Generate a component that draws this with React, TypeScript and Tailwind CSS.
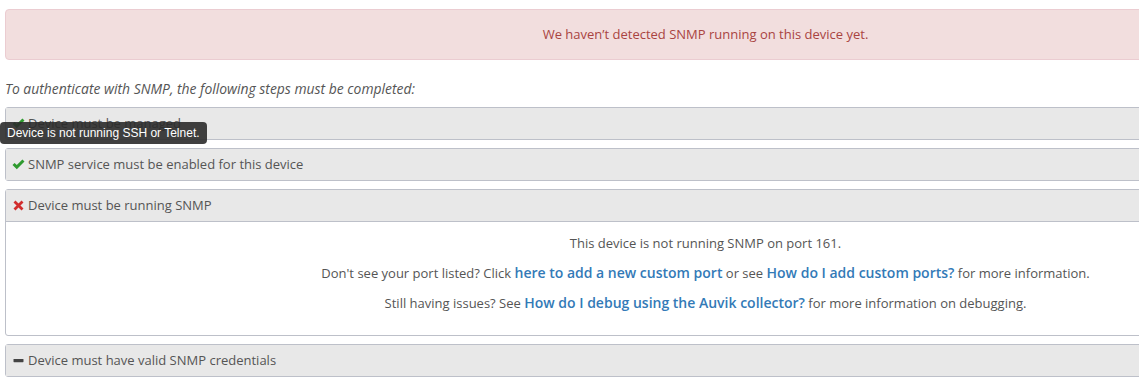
import React from 'react';

const CheckIcon = () => (
  <svg width="13" height="11" viewBox="0 0 13 11" className="shrink-0">
    <path d="M0.5 6 L2.6 3.9 L4.8 6.1 L10.4 0.5 L12.5 2.6 L4.8 10.3 Z" fill="#2e9a2e" />
  </svg>
);

const CrossIcon = () => (
  <svg width="11" height="11" viewBox="0 0 11 11" className="shrink-0">
    <path d="M1.5 1.5 L9.5 9.5 M9.5 1.5 L1.5 9.5" stroke="#d12d2d" strokeWidth="2.8" strokeLinecap="butt" />
  </svg>
);

const MinusIcon = () => (
  <svg width="11" height="11" viewBox="0 0 11 11" className="shrink-0">
    <rect x="0.5" y="4" width="10" height="3.2" rx="0.6" fill="#444" />
  </svg>
);

interface StepProps {
  icon: React.ReactNode;
  label: string;
  children?: React.ReactNode;
}

const Step: React.FC<StepProps> = ({ icon, label, children }) => (
  <div className="border border-[#bdc0c9] rounded-[3px] bg-white">
    <div className="h-[31px] bg-[#e8e8e8] flex items-center gap-[3px] pl-[6px] text-[13px] text-[#555]">
      <span className="w-[13px] flex justify-center">{icon}</span>
      <span>{label}</span>
    </div>
    {children && (
      <div className="border-t border-[#bdc0c9] pt-[12px] pb-[23px] flex flex-col items-center gap-[12px] text-[13px] text-[#555] leading-[18px]">
        {children}
      </div>
    )}
  </div>
);

const App: React.FC = () => {
  return (
    <div className="w-[1139px] h-[390px] overflow-hidden bg-white font-['Open_Sans',sans-serif]">
      <div className="w-[1406px] pl-[5px] pt-[9px] relative">
        <div className="h-[51px] bg-[#f2dede] border border-[#ebccd1] rounded-[4px] flex items-center justify-center text-[13px] text-[#a94442]">
          We haven’t detected SNMP running on this device yet.
        </div>

        <p className="mt-[20px] italic text-[13.9px] text-[#555] leading-[18px]">
          To authenticate with SNMP, the following steps must be completed:
        </p>

        <div className="mt-[9px] flex flex-col gap-[8px]">
          <Step icon={<CheckIcon />} label="Device must be managed" />
          <Step icon={<CheckIcon />} label="SNMP service must be enabled for this device" />
          <Step icon={<CrossIcon />} label="Device must be running SNMP">
            <p>This device is not running SNMP on port 161.</p>
            <p>
              Don't see your port listed? Click{' '}
              <a href="#" className="text-[14px] font-semibold text-[#337ab7]">here to add a new custom port</a>{' '}
              or see{' '}
              <a href="#" className="text-[14px] font-semibold text-[#337ab7]">How do I add custom ports?</a>{' '}
              for more information.
            </p>
            <p>
              Still having issues? See{' '}
              <a href="#" className="text-[14px] font-semibold text-[#337ab7]">How do I debug using the Auvik collector?</a>{' '}
              for more information on debugging.
            </p>
          </Step>
          <Step icon={<MinusIcon />} label="Device must have valid SNMP credentials" />
        </div>

        <div className="absolute left-0 top-[122px] h-[22px] px-[7px] flex items-center rounded-[4px] bg-[#2b2b2b]/90 text-white text-[12px] font-['Liberation_Sans',sans-serif]">
          Device is not running SSH or Telnet.
        </div>
      </div>
    </div>
  );
};

export default App;
